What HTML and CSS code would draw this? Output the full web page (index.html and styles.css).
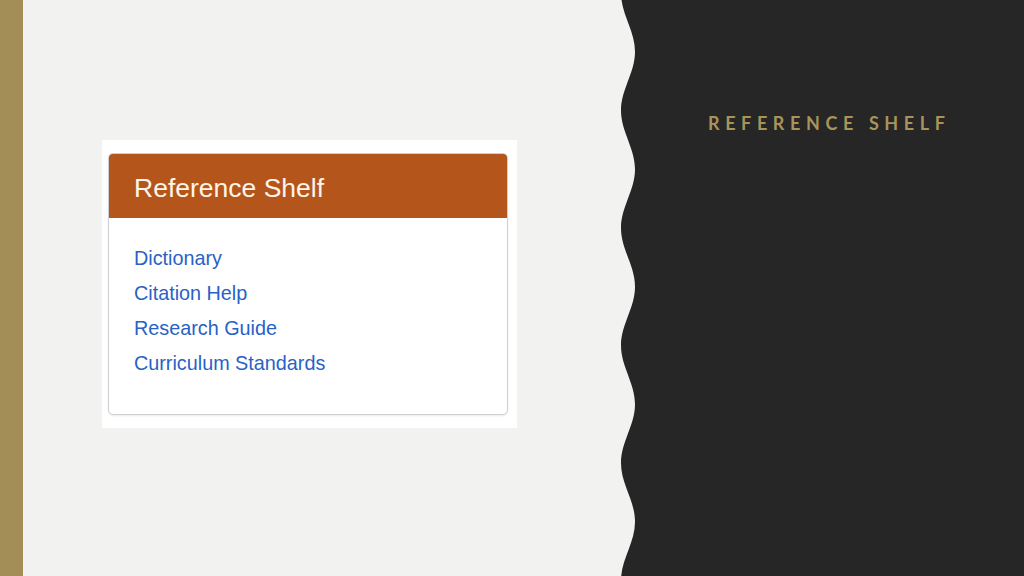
FILE: index.html
```html
<!DOCTYPE html>
<html lang="en">
<head>
<meta charset="utf-8">
<title>Reference Shelf</title>
<link rel="stylesheet" href="styles.css">
</head>
<body>
<div class="slide">
  <div class="accent-bar"></div>
  <main class="content">
    <div class="shot">
      <section class="card">
        <header class="card-head">Reference Shelf</header>
        <ul class="card-links">
          <li><a href="#">Dictionary</a></li>
          <li><a href="#">Citation Help</a></li>
          <li><a href="#">Research Guide</a></li>
          <li><a href="#">Curriculum Standards</a></li>
        </ul>
      </section>
    </div>
  </main>
  <svg class="wave" viewBox="0 0 15 576" preserveAspectRatio="none" aria-hidden="true">
    <path d="M15,-7 L0,-7 C0,14.4 14,30.35 14,51.75 C14,73.15 0,89.1 0,110.5 C0,131.9 14,147.85 14,169.25 C14,190.65 0,206.6 0,228 C0,249.4 14,265.35 14,286.75 C14,308.15 0,324.1 0,345.5 C0,366.9 14,382.85 14,404.25 C14,425.65 0,441.6 0,463 C0,484.4 14,500.35 14,521.75 C14,543.15 0,559.1 0,580.5 L15,580.5 Z"/>
  </svg>
  <aside class="side">
    <h1 class="side-title">REFERENCE SHELF</h1>
  </aside>
</div>
</body>
</html>
```

FILE: styles.css
```css
html, body {
  margin: 0;
  padding: 0;
}

body {
  width: 1024px;
  height: 576px;
  overflow: hidden;
  background: #f2f2f0;
}

.slide {
  display: flex;
  width: 1024px;
  height: 576px;
}

.accent-bar {
  width: 23px;
  flex: none;
  background: #a38e58;
}

.content {
  flex: 1;
  padding: 140px 0 0 79px;
  background: #f2f2f0;
}

.shot {
  width: 415px;
  height: 288px;
  box-sizing: border-box;
  background: #ffffff;
  padding: 13px 9px 0 6px;
}

.card {
  width: 400px;
  height: 262px;
  box-sizing: border-box;
  border: 1px solid #cfcfcf;
  border-radius: 5px;
  overflow: hidden;
  box-shadow: 0 1px 2px rgba(0, 0, 0, 0.08);
  font-family: "Liberation Sans", Arial, sans-serif;
}

.card-head {
  height: 64px;
  box-sizing: border-box;
  padding: 19px 0 0 25px;
  background: #b4561c;
  color: #fff4e8;
  font-size: 26.5px;
  line-height: 30px;
}

.card-links {
  list-style: none;
  margin: 0;
  padding: 23px 0 0 25px;
}

.card-links li {
  font-size: 19.8px;
  line-height: 35px;
}

.card-links a {
  color: #2862c6;
  text-decoration: none;
}

.wave {
  width: 15px;
  height: 576px;
  flex: none;
  display: block;
  fill: #262626;
  overflow: visible;
}

.side {
  width: 388px;
  flex: none;
  background: #262626;
  padding: 112px 0 0 72px;
  box-sizing: border-box;
}

.side-title {
  margin: 0;
  font-family: Lato, "Open Sans", sans-serif;
  font-weight: 700;
  font-size: 18px;
  line-height: 22px;
  letter-spacing: 5.6px;
  color: #a8945a;
}
```
